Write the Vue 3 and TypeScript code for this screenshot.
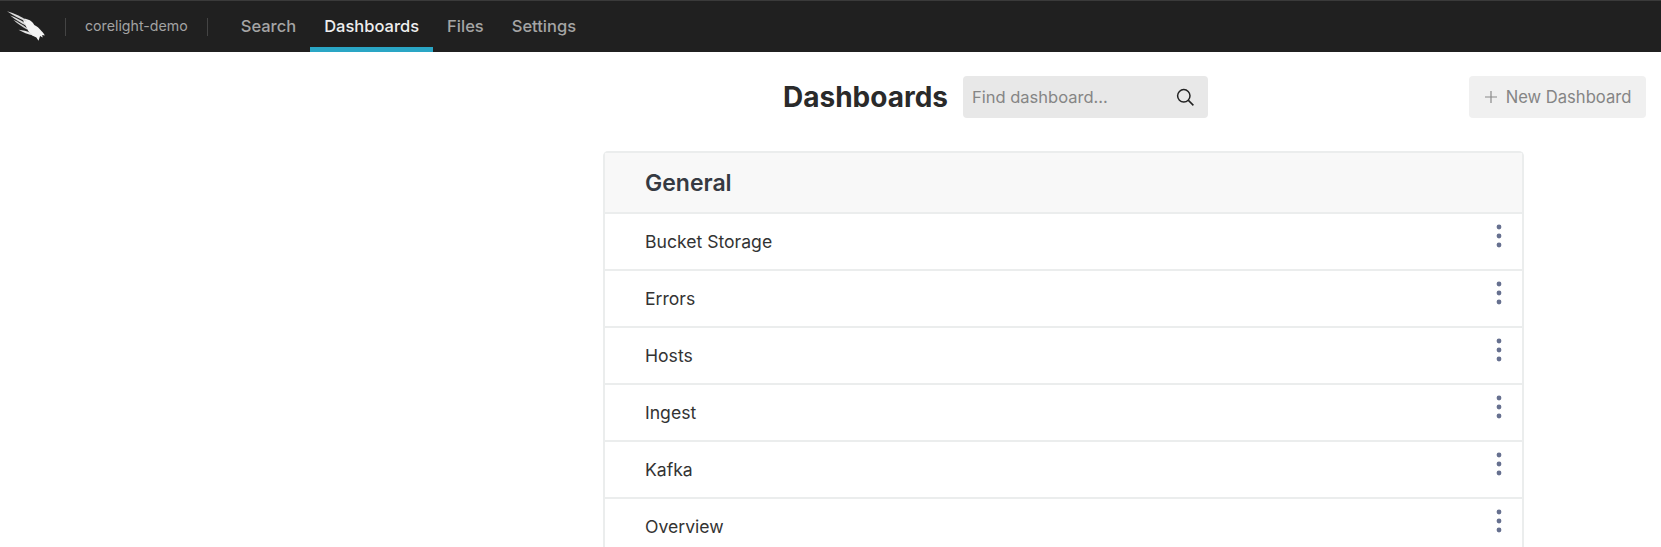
<script setup lang="ts">
const tabs = [
  { label: 'Search', active: false },
  { label: 'Dashboards', active: true },
  { label: 'Files', active: false },
  { label: 'Settings', active: false },
]
const rows: string[] = ['Bucket Storage', 'Errors', 'Hosts', 'Ingest', 'Kafka', 'Overview']
</script>

<template>
  <div class="page">
    <header class="nav">
      <svg class="logo" viewBox="0 0 40 30" width="42" height="32" aria-hidden="true">
        <path fill="#f4f4f4" d="M16 8 C20 8 24 10 26 14 C28 15 31 17 33 20 C34 21 35 22 36 24 L33.5 23.5 L34 26 L31.5 24.5 L30 29 L28 26 L24 24 C21 22 19 18 18 15 C16 13 15 10 16 8 Z" />
        <path fill="#dcdcdc" d="M0 1 C7 3 14 6 19 10 L18 11 C12 8 6 5 0 1 Z" />
        <path fill="#dcdcdc" d="M3 5 C8 7 13 9 18 13 L18 14.5 C13 12 8 9 3 5 Z" />
        <path fill="#cfcfcf" d="M6 9 C10 11 14 13 19 17 L19.5 18.5 C15 16 10 13 6 9 Z" />
        <path fill="#e6e6e6" d="M11 18.5 C15 19 19 19.5 23 22 L25 24 C20 23 15 21 11 18.5 Z" />
      </svg>
      <span class="sep"></span>
      <span class="org">corelight-demo</span>
      <span class="sep sep-right"></span>
      <nav class="tabs">
        <a v-for="t in tabs" :key="t.label" class="tab" :class="{ active: t.active }">{{ t.label }}</a>
      </nav>
    </header>

    <section class="toolbar">
      <h1 class="title">Dashboards</h1>
      <div class="search">
        <span class="placeholder">Find dashboard...</span>
        <svg viewBox="0 0 20 20" width="20" height="20" aria-hidden="true">
          <circle cx="8.8" cy="8.8" r="6.2" fill="none" stroke="#222" stroke-width="1.5" />
          <path d="M13.4 13.4 L18.4 18.4" stroke="#222" stroke-width="1.5" fill="none" />
        </svg>
      </div>
      <button class="new" type="button">
        <svg viewBox="0 0 14 14" width="14" height="14" aria-hidden="true">
          <path d="M7 1 V13 M1 7 H13" stroke="#8a8a8a" stroke-width="1.2" fill="none" />
        </svg>
        <span>New Dashboard</span>
      </button>
    </section>

    <section class="card">
      <div class="card-head">General</div>
      <div v-for="r in rows" :key="r" class="row">
        <span class="row-label">{{ r }}</span>
        <svg class="more" viewBox="0 0 6 24" width="6" height="24" aria-hidden="true">
          <circle cx="3" cy="3" r="2.4" fill="#66708f" />
          <circle cx="3" cy="12" r="2.4" fill="#66708f" />
          <circle cx="3" cy="21" r="2.4" fill="#66708f" />
        </svg>
      </div>
    </section>
  </div>
</template>

<style>
html, body { margin: 0; background: #fff; overflow: hidden; }
</style>

<style scoped>
.page {
  width: 1661px;
  height: 547px;
  overflow: hidden;
  font-family: Inter, "Liberation Sans", sans-serif;
  color: #2b2b2b;
}
.nav {
  height: 52px;
  box-sizing: border-box;
  background: #202020;
  border-top: 1px solid #3a3a3a;
  display: flex;
  align-items: center;
  padding-left: 7px;
}
.logo { flex: none; margin-top: -1px; }
.sep {
  width: 1px;
  height: 18px;
  background: #444;
  margin-left: 16px;
}
.sep-right { margin-left: 19px; }
.org {
  font-size: 14.2px;
  color: #a3a3a3;
  margin: -2px 0 0 19px;
  white-space: nowrap;
}
.tabs {
  display: flex;
  align-self: stretch;
  margin-left: 19px;
}
.tab {
  display: flex;
  align-items: center;
  padding: 3px 14px 0;
  font-size: 16.5px;
  font-weight: 500;
  color: #a5a5a5;
  border-bottom: 5px solid transparent;
}
.tab.active { color: #eeeeee; border-bottom-color: #2aa6c5; }
.toolbar {
  display: flex;
  align-items: center;
  height: 42px;
  margin-top: 24px;
  padding: 0 15px 0 783px;
}
.title {
  margin: 0;
  font-size: 28px;
  font-weight: 700;
  color: #2a2a2a;
  white-space: nowrap;
}
.search {
  width: 245px;
  height: 42px;
  box-sizing: border-box;
  margin-left: 15px;
  padding: 0 13px 0 9px;
  background: #e8e8e8;
  border-radius: 4px;
  display: flex;
  align-items: center;
  justify-content: space-between;
}
.placeholder { font-size: 16.5px; color: #858585; }
.new {
  margin-left: auto;
  width: 177px;
  height: 42px;
  border: 0;
  border-radius: 4px;
  background: #f0f0f0;
  display: flex;
  align-items: center;
  justify-content: center;
  gap: 8px;
  font: 400 16.6px Inter, "Liberation Sans", sans-serif;
  color: #858585;
  padding: 0;
}
.card {
  width: 921px;
  box-sizing: border-box;
  margin: 33px 0 0 603px;
  border: 2px solid #ebeded;
  border-bottom: 0;
  border-radius: 5px 5px 0 0;
}
.card-head {
  height: 59px;
  box-sizing: border-box;
  background: #f8f8f8;
  padding-left: 40px;
  display: flex;
  align-items: center;
  font-size: 23px;
  font-weight: 600;
  color: #363a42;
}
.row {
  height: 57px;
  box-sizing: border-box;
  border-top: 2px solid #ebeded;
  padding: 0 20px 0 40px;
  display: flex;
  align-items: center;
  justify-content: space-between;
  font-size: 17.6px;
  color: #333;
}
.row-label { margin-top: -1px; }
.more { margin-top: -12px; }
</style>
